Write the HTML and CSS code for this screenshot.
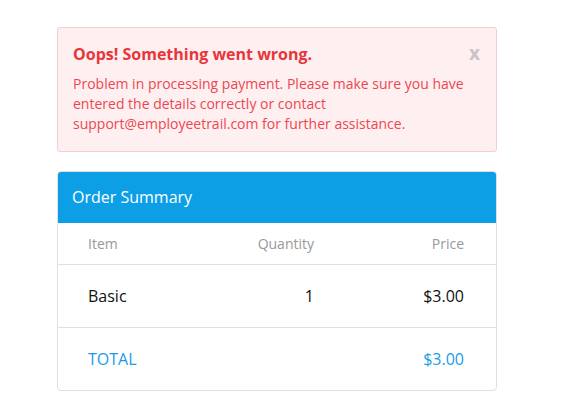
FILE: index.html
```html
<!DOCTYPE html>
<html lang="en">
<head>
    <meta charset="UTF-8">
    <meta name="viewport" content="width=device-width, initial-scale=1.0">
    <title>Payment</title>
    <link rel="stylesheet" href="styles.css">
</head>
<body>
    <div class="wrap">
        <!-- Error alert -->
        <div class="alert">
            <span class="alert-close">x</span>
            <h4>Oops! Something went wrong.</h4>
            <p>Problem in processing payment. Please make sure you have entered the details correctly or contact support@employeetrail.com for further assistance.</p>
        </div>

        <!-- Order summary -->
        <div class="summary">
            <div class="summary-head">Order Summary</div>
            <div class="row row-head">
                <span>Item</span>
                <span class="num">Quantity</span>
                <span class="num">Price</span>
            </div>
            <div class="row row-item">
                <span>Basic</span>
                <span class="num">1</span>
                <span class="num">$3.00</span>
            </div>
            <div class="row row-total">
                <span>TOTAL</span>
                <span class="num"></span>
                <span class="num">$3.00</span>
            </div>
        </div>
    </div>
</body>
</html>
```

FILE: styles.css
```css
/* General */
body, html {
    margin: 0;
    padding: 0;
    background: #fff;
    font-family: "Open Sans", Arial, sans-serif;
}

.wrap {
    width: 440px;
    margin-left: 57px;
    padding-top: 27px;
}

/* Alert */
.alert {
    position: relative;
    background: #fef0f0;
    border: 1px solid #f5cdd2;
    border-radius: 3px;
    padding: 14px 15px 17px 15px;
    color: #f0404a;
}

.alert h4 {
    margin: 0 0 8px 0;
    font-size: 16px;
    font-weight: 700;
    line-height: 24px;
    color: #e8353a;
}

.alert p {
    margin: 0;
    font-size: 14px;
    line-height: 20px;
    color: #ee4650;
}

.alert-close {
    position: absolute;
    right: 16px;
    top: 13px;
    font-size: 19px;
    font-weight: 700;
    color: #c9c5c5;
    line-height: 24px;
}

/* Order summary */
.summary {
    margin-top: 19px;
    border: 1px solid #e0e0e0;
    border-radius: 4px;
    overflow: hidden;
}

.summary-head {
    background: #0c9fe6;
    color: #fff;
    font-size: 16px;
    height: 52px;
    line-height: 52px;
    padding-left: 15px;
    margin: -1px -1px 0 -1px;
}

.row {
    display: grid;
    grid-template-columns: 1fr 100px 150px;
    align-items: center;
    padding: 0 32px 0 30px;
    border-bottom: 1px solid #e0e0e0;
}

.row:last-child {
    border-bottom: none;
}

.num {
    text-align: right;
}

.row-head {
    height: 41px;
    font-size: 14px;
    color: #999;
}

.row-item {
    height: 62px;
    font-size: 16px;
    color: #111;
}

.row-total {
    height: 62px;
    font-size: 16px;
    color: #1a9be6;
}
```
